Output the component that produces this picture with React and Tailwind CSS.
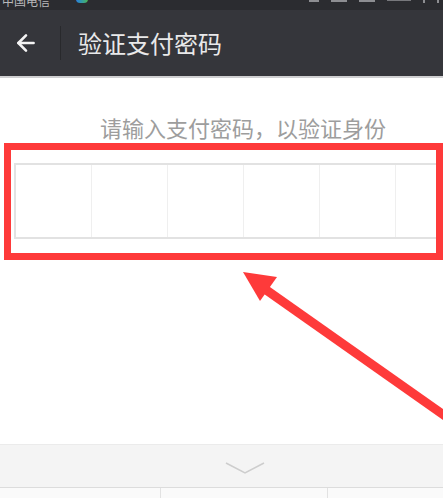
import React from 'react';
import { ArrowLeft } from 'lucide-react';

const cells = [0, 1, 2, 3, 4, 5];

export default function App() {
  return (
    <div className="relative flex h-[498px] w-[443px] flex-col overflow-hidden bg-white font-['Noto_Sans_CJK_SC',sans-serif]">
      {/* status bar, cut off at the top */}
      <div className="flex h-[10px] items-start overflow-hidden bg-[#2b2c30]">
        <span className="-mt-[6px] ml-[2px] text-[12px] leading-[14px] text-[#b9b9bb]">中国电信</span>
        <span className="ml-[26px] -mt-[2px] h-[5px] w-[12px] rounded-b-sm bg-gradient-to-r from-[#2f7be0] to-[#4fb348]" />
        <div className="ml-auto mr-[4px] flex items-start gap-[12px]">
          <span className="h-[2px] w-[10px] bg-[#8d8e92]" />
          <span className="h-[2px] w-[16px] bg-[#8d8e92]" />
          <span className="h-[2px] w-[16px] bg-[#8d8e92]" />
          <span className="h-[1px] w-[24px] bg-[#77787c]" />
          <span className="h-[3px] w-[2px] bg-[#8d8e92]" />
          <span className="h-[3px] w-[2px] bg-[#8d8e92]" />
        </div>
      </div>

      {/* nav bar */}
      <div className="flex h-[66px] items-center bg-[#35363b]">
        <div className="flex w-[60px] pl-[13px]">
          <ArrowLeft size={26} strokeWidth={2.4} className="text-[#f4f4f4]" />
        </div>
        <div className="h-[34px] w-px bg-[#28292c]" />
        <span className="ml-[17px] text-[24px] leading-[32px] text-[#e9e9ea]">验证支付密码</span>
      </div>
      <div className="h-[2px] bg-[#cfcfd1]" />

      {/* content */}
      <p className="mt-[34px] pl-[100px] text-[22px] leading-[30px] text-[#9d9d9d]">请输入支付密码，以验证身份</p>

      <div className="mt-[1px] ml-[4px] h-[117px] w-[439px] overflow-hidden border-[7px] border-[#fe3a3a] pl-[3px] pt-[13px]">
        <div className="flex h-[76px] w-[460px] border-2 border-[#e2e2e2]">
          {cells.map((c) => (
            <div key={c} className="h-full w-[76px] shrink-0 border-r border-[#efefef] last:border-r-0" />
          ))}
        </div>
      </div>

      <div className="flex-1" />

      {/* keyboard toggle */}
      <div className="flex h-[43px] items-start justify-center border-t border-[#ebebeb] bg-[#f4f4f4] pt-[17px]">
        <svg width="40" height="13" viewBox="0 0 40 13" className="ml-[46px]">
          <path d="M1 1 L20 11 L39 1" fill="none" stroke="#cdcdcd" strokeWidth="1.5" />
        </svg>
      </div>
      <div className="flex h-[11px] border-t border-[#dcdcdc] bg-[#fafafa]">
        <div className="w-[161px] border-r border-[#e2e2e2]" />
        <div className="w-[167px] border-r border-[#e2e2e2]" />
        <div className="flex-1" />
      </div>

      {/* annotation arrow */}
      <svg className="pointer-events-none absolute left-0 top-0" width="443" height="498" viewBox="0 0 443 498">
        <line x1="262" y1="287" x2="472" y2="435" stroke="#fe3a3a" strokeWidth="9" />
        <polygon points="243,272 277,277 260,301" fill="#fe3a3a" />
      </svg>
    </div>
  );
}
